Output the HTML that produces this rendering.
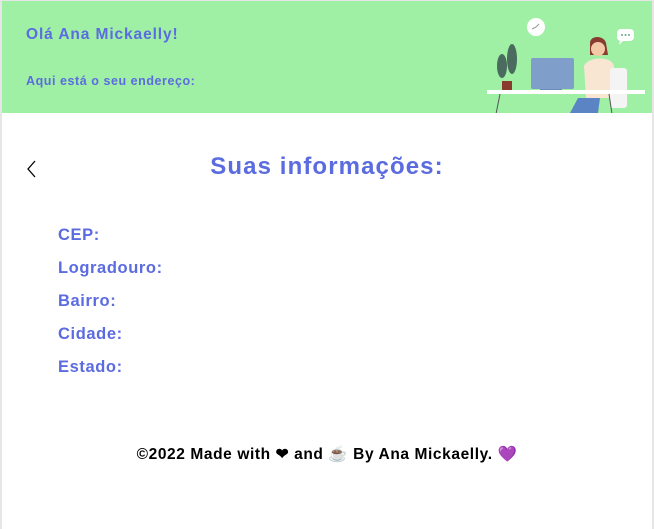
<!DOCTYPE html>
<html><head><meta charset="utf-8"><style>
*{margin:0;padding:0;box-sizing:border-box}
body{width:654px;height:529px;background:#e6e6e6;font-family:"Liberation Sans",sans-serif;overflow:hidden;position:relative}
.page{position:absolute;left:2px;top:1px;width:650px;height:528px;background:#fff}
.hdr{position:absolute;left:0;top:0;width:650px;height:112px;background:#9ff0a5}
.t{position:absolute;color:#5b6be0;font-weight:bold;white-space:nowrap}
</style></head><body><div class="page">
<div class="hdr">
<div class="t" style="left:24px;top:25px;font-size:15.5px;letter-spacing:0.9px">Olá Ana Mickaelly!</div>
<div class="t" style="left:24px;top:73px;font-size:12.5px;letter-spacing:0.55px">Aqui está o seu endereço:</div>
<svg style="position:absolute;left:468px;top:0" width="182" height="112">
<circle cx="66" cy="26" r="9" fill="#fff"/><path d="M66 26l-4 2M66 26l3-3" stroke="#999" stroke-width="1"/>
<rect x="147" y="28" width="17" height="12" rx="4" fill="#fff"/><path d="M150 40l-1 4 4-4z" fill="#fff"/>
<circle cx="152" cy="34" r="1" fill="#6a8"/><circle cx="155.5" cy="34" r="1" fill="#6a8"/><circle cx="159" cy="34" r="1" fill="#6a8"/>
<ellipse cx="32" cy="65" rx="5" ry="12" fill="#4a6b5e"/><ellipse cx="42" cy="58" rx="5" ry="15" fill="#4a6b5e"/>
<rect x="32" y="80" width="10" height="9" fill="#8a3b2f"/>
<rect x="61" y="57" width="43" height="31" rx="2" fill="#7f9ec9"/><rect x="78" y="86" width="8" height="5" fill="#7f9ec9"/><rect x="70" y="88" width="22" height="2" fill="#6a8bb8"/>
<path d="M120 42c0-8 14-8 16 0l2 12h-18z" fill="#8a3b2f"/><circle cx="128" cy="48" r="7" fill="#f3c9a8"/>
<path d="M114 65c4-10 28-10 30 0l2 32h-30z" fill="#f8e6d3"/>
<rect x="140" y="67" width="17" height="40" rx="3" fill="#f4f4f4"/>
<path d="M108 97l22 0 -2 15h-28z" fill="#5b84c4"/>
<rect x="17" y="89" width="158" height="4" fill="#fff"/>
<path d="M30 93l-4 20M139 93l3 20" stroke="#555" stroke-width="1"/>
</svg>
</div>
<svg style="position:absolute;left:24px;top:158px" width="12" height="20"><path d="M9 2L2 10l7 8" fill="none" stroke="#000" stroke-width="1.3"/></svg>
<div class="t" style="left:0;width:650px;text-align:center;top:152px;font-size:24px;letter-spacing:1.1px">Suas informações:</div>
<div class="t" style="left:56px;top:218px;font-size:16.5px;line-height:33px;letter-spacing:0.6px">CEP:<br>Logradouro:<br>Bairro:<br>Cidade:<br>Estado:</div>
<div style="position:absolute;left:0;width:650px;text-align:center;top:444px;font-size:15.5px;font-weight:bold;color:#000;letter-spacing:0.6px">©2022 Made with ❤ and ☕ By Ana Mickaelly. <span style="color:#a04cc8">💜</span></div>
</div></body></html>
